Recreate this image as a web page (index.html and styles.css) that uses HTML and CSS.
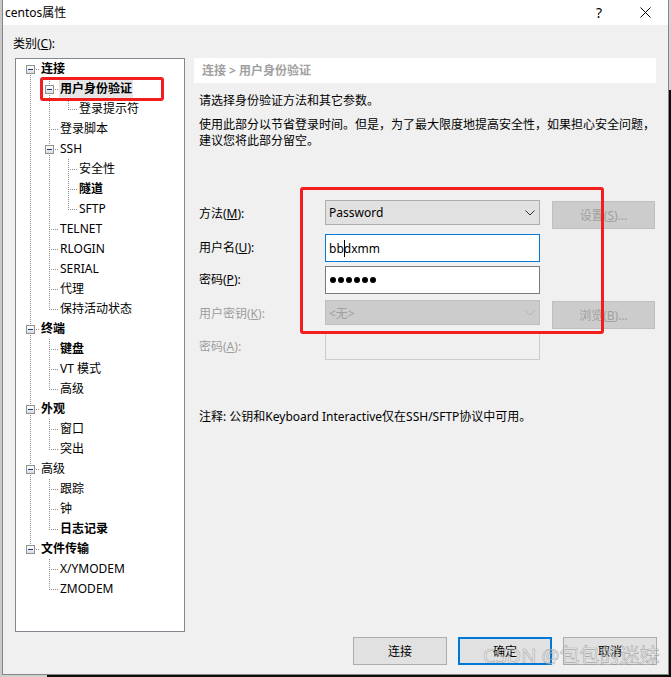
FILE: index.html
```html
<!DOCTYPE html>
<html lang="zh-CN">
<head>
<meta charset="utf-8">
<title>centos属性</title>
<link rel="stylesheet" href="styles.css">
</head>
<body>
<div class="window">
  <div class="titlebar">
    <span class="title">centos属性</span>
    <div class="caption">
      <span class="cap-btn help">?</span>
      <span class="cap-btn close"><svg width="11" height="11" viewBox="0 0 11 11"><path d="M0.5 0.5 L10.5 10.5 M10.5 0.5 L0.5 10.5" stroke="#000" stroke-width="1" fill="none"/></svg></span>
    </div>
  </div>
  <div class="main">
    <div class="left">
      <div class="cat-label">类别(<u>C</u>):</div>
      <div class="tree">
        <div class="row"><span class="g first"><i class="box"></i></span><span class="lbl b">连接</span></div>
        <div class="row"><span class="g v"></span><span class="g tee"><i class="box"></i></span><span class="lbl b sel">用户身份验证</span></div>
        <div class="row"><span class="g v"></span><span class="g v"></span><span class="g elbow"></span><span class="lbl">登录提示符</span></div>
        <div class="row"><span class="g v"></span><span class="g tee"></span><span class="lbl">登录脚本</span></div>
        <div class="row"><span class="g v"></span><span class="g tee"><i class="box"></i></span><span class="lbl">SSH</span></div>
        <div class="row"><span class="g v"></span><span class="g v"></span><span class="g tee"></span><span class="lbl">安全性</span></div>
        <div class="row"><span class="g v"></span><span class="g v"></span><span class="g tee"></span><span class="lbl b">隧道</span></div>
        <div class="row"><span class="g v"></span><span class="g v"></span><span class="g elbow"></span><span class="lbl">SFTP</span></div>
        <div class="row"><span class="g v"></span><span class="g tee"></span><span class="lbl">TELNET</span></div>
        <div class="row"><span class="g v"></span><span class="g tee"></span><span class="lbl">RLOGIN</span></div>
        <div class="row"><span class="g v"></span><span class="g tee"></span><span class="lbl">SERIAL</span></div>
        <div class="row"><span class="g v"></span><span class="g tee"></span><span class="lbl">代理</span></div>
        <div class="row"><span class="g v"></span><span class="g elbow"></span><span class="lbl">保持活动状态</span></div>
        <div class="row"><span class="g tee"><i class="box"></i></span><span class="lbl b">终端</span></div>
        <div class="row"><span class="g v"></span><span class="g tee"></span><span class="lbl b">键盘</span></div>
        <div class="row"><span class="g v"></span><span class="g tee"></span><span class="lbl">VT 模式</span></div>
        <div class="row"><span class="g v"></span><span class="g elbow"></span><span class="lbl">高级</span></div>
        <div class="row"><span class="g tee"><i class="box"></i></span><span class="lbl b">外观</span></div>
        <div class="row"><span class="g v"></span><span class="g tee"></span><span class="lbl">窗口</span></div>
        <div class="row"><span class="g v"></span><span class="g elbow"></span><span class="lbl">突出</span></div>
        <div class="row"><span class="g tee"><i class="box"></i></span><span class="lbl">高级</span></div>
        <div class="row"><span class="g v"></span><span class="g tee"></span><span class="lbl">跟踪</span></div>
        <div class="row"><span class="g v"></span><span class="g tee"></span><span class="lbl">钟</span></div>
        <div class="row"><span class="g v"></span><span class="g elbow"></span><span class="lbl b">日志记录</span></div>
        <div class="row"><span class="g elbow"><i class="box"></i></span><span class="lbl b">文件传输</span></div>
        <div class="row"><span class="g"></span><span class="g tee"></span><span class="lbl">X/YMODEM</span></div>
        <div class="row"><span class="g"></span><span class="g elbow"></span><span class="lbl">ZMODEM</span></div>
      </div>
    </div>
    <div class="right">
      <div class="crumb">连接 &gt; 用户身份验证</div>
      <p class="intro">请选择身份验证方法和其它参数。</p>
      <p class="desc">使用此部分以节省登录时间。但是，为了最大限度地提高安全性，如果担心安全问题，<br>建议您将此部分留空。</p>
      <div class="form">
        <div class="flbl">方法(<u>M</u>):</div>
        <div class="select h25"><span>Password</span><svg width="10" height="6" viewBox="0 0 10 6"><path d="M0.5 0.5 L5 5 L9.5 0.5" stroke="#333" fill="none"/></svg></div>
        <div class="btn dis mt1">设置(<u>S</u>)...</div>

        <div class="flbl">用户名(<u>U</u>):</div>
        <div class="input focus">bb<span class="caret"></span>dxmm</div>
        <div></div>

        <div class="flbl">密码(<u>P</u>):</div>
        <div class="input pw"><i></i><i></i><i></i><i></i><i></i><i></i></div>
        <div></div>

        <div class="flbl dim">用户密钥(<u>K</u>):</div>
        <div class="select dis h25"><span>&lt;无&gt;</span><svg width="10" height="6" viewBox="0 0 10 6"><path d="M0.5 0.5 L5 5 L9.5 0.5" stroke="#b4b4b4" fill="none"/></svg></div>
        <div class="btn dis mt1">浏览(<u>B</u>)...</div>

        <div class="flbl dim">密码(<u>A</u>):</div>
        <div class="input off"></div>
        <div></div>
      </div>
      <p class="note">注释: 公钥和Keyboard Interactive仅在SSH/SFTP协议中可用。</p>
    </div>
  </div>
  <div class="buttons">
    <div class="btn big">连接</div>
    <div class="btn big default">确定</div>
    <div class="btn big">取消</div>
  </div>
</div>
<div class="mark mark-tree"></div>
<div class="mark mark-form"></div>
<div class="watermark">CSDN @包包的迷妹</div>
</body>
</html>
```

FILE: styles.css
```css
html {
  --dv: repeating-linear-gradient(to bottom, #8c8c8c 0 1px, transparent 1px 2px);
  --dh: repeating-linear-gradient(to right, #8c8c8c 0 1px, transparent 1px 2px);
}
body {
  margin: 0;
  position: relative;
  width: 671px;
  height: 677px;
  overflow: hidden;
  font-family: "Noto Sans", "Noto Sans CJK SC", sans-serif;
  font-size: 12px;
  color: #000;
  background:
    linear-gradient(#c9c9c9, #c9c9c9) 0 0 / 2px 100% no-repeat,
    linear-gradient(#d4d4d4, #d4d4d4) 669px 0 / 2px 90px no-repeat,
    linear-gradient(#cfcfcf, #cfcfcf) 0 675px / 47px 2px no-repeat,
    #0b0b0b;
}
.window {
  margin-left: 2px;
  width: 667px;
  height: 675px;
  box-sizing: border-box;
  border: 1px solid #858585;
  border-top: none;
  background: #f0f0f0;
  display: flex;
  flex-direction: column;
}
.titlebar {
  height: 25px;
  background: #fff;
  display: flex;
  align-items: center;
  padding-left: 2px;
  flex: none;
}
.title { line-height: 16px; }
.caption { margin-left: auto; display: flex; height: 25px; }
.cap-btn {
  width: 46px;
  height: 25px;
  display: flex;
  align-items: center;
  justify-content: center;
}
.help { font-size: 14px; padding-bottom: 1px; box-sizing: border-box; }
.main { display: flex; padding-left: 10px; flex: none; }
.left { width: 172px; padding-top: 11px; flex: none; }
.cat-label { line-height: 16px; margin-bottom: 6px; }
.tree {
  margin-left: 2px;
  width: 170px;
  height: 574px;
  box-sizing: border-box;
  border: 1px solid #828790;
  background: #fff;
  padding-left: 5px;
}
.row { display: flex; align-items: center; height: 20px; }
.g {
  width: 19px;
  height: 20px;
  flex: none;
  display: flex;
  align-items: center;
  background-repeat: no-repeat;
}
.g.v { background-image: var(--dv); background-size: 1px 20px; background-position: 9px 0; }
.g.tee {
  background-image: var(--dv), var(--dh);
  background-size: 1px 20px, 8px 1px;
  background-position: 9px 0, 11px 10px;
}
.g.elbow {
  background-image: var(--dv), var(--dh);
  background-size: 1px 11px, 8px 1px;
  background-position: 9px 0, 11px 10px;
}
.g.first {
  background-image: var(--dv), var(--dh);
  background-size: 1px 10px, 8px 1px;
  background-position: 9px 10px, 11px 10px;
}
.box {
  width: 9px;
  height: 9px;
  box-sizing: border-box;
  margin-left: 5px;
  border: 1px solid #919191;
  background: linear-gradient(#ffffff, #dcdcdc);
  display: flex;
  align-items: center;
  justify-content: center;
}
.box::before { content: ""; width: 5px; height: 1px; background: #1e3b87; }
.lbl { height: 18px; line-height: 18px; padding: 0 1px; white-space: nowrap; }
.b { font-weight: 700; }
.sel { background: #e6e6e6; }

.right { margin-left: 9px; padding-top: 33px; width: 462px; flex: none; }
.crumb {
  height: 25px;
  line-height: 25px;
  background: #fff;
  padding-left: 8px;
  color: #a0a0a0;
  font-weight: 700;
}
.intro { margin: 10px 0 0; padding-left: 5px; line-height: 16px; }
.desc { margin: 8px 0 0; padding-left: 5px; line-height: 16px; white-space: nowrap; }
.form {
  margin-top: 51px;
  padding-left: 5px;
  display: grid;
  grid-template-columns: 114px 215px 103px;
  grid-template-rows: 34px 32px 34px 33px 27px;
  column-gap: 12px;
  align-items: start;
}
.flbl { line-height: 27px; white-space: nowrap; }
.dim { color: #9d9d9d; }
.select {
  box-sizing: border-box;
  border: 1px solid #adadad;
  background: #e1e1e1;
  display: flex;
  align-items: center;
  justify-content: space-between;
  padding: 0 4px 0 3px;
}
.h25 { height: 25px; }
.select.dis { background: #cccccc; border-color: #bfbfbf; color: #a0a0a0; }
.input {
  box-sizing: border-box;
  height: 28px;
  border: 1px solid #7a7a7a;
  background: #fff;
  display: flex;
  align-items: center;
  padding-left: 3px;
}
.input.focus { border-color: #0078d7; }
.caret { width: 1px; height: 17px; background: #000; margin-right: -1px; flex: none; }
.input.pw { gap: 2px; padding-left: 4px; }
.input.pw i { width: 6px; height: 6px; border-radius: 50%; background: #000; flex: none; }
.input.off { height: 27px; border-color: #cccccc; background: #f0f0f0; }
.btn {
  box-sizing: border-box;
  height: 28px;
  border: 1px solid #adadad;
  background: #e1e1e1;
  display: flex;
  align-items: center;
  justify-content: center;
  white-space: nowrap;
}
.btn.dis { background: #cccccc; border-color: #bfbfbf; color: #a0a0a0; }
.mt1 { margin-top: 1px; }
.note { margin: 49px 0 0; padding-left: 5px; line-height: 16px; white-space: nowrap; }
.buttons {
  display: flex;
  justify-content: flex-end;
  gap: 11px;
  padding: 5px 11px 0 0;
}
.btn.big { width: 94px; }
.btn.default { border: 2px solid #0078d7; }

.mark {
  position: absolute;
  box-sizing: border-box;
  border: 3px solid #f21d1d;
  border-radius: 3px;
}
.mark-tree { left: 40px; top: 77px; width: 124px; height: 24px; }
.mark-form { left: 300px; top: 187px; width: 304px; height: 147px; }
.watermark {
  position: absolute;
  left: 483px;
  top: 643px;
  font-size: 20px;
  line-height: 26px;
  white-space: nowrap;
  color: rgba(255, 255, 255, 0.45);
  -webkit-text-stroke: 0.6px rgba(110, 110, 110, 0.55);
}
```
